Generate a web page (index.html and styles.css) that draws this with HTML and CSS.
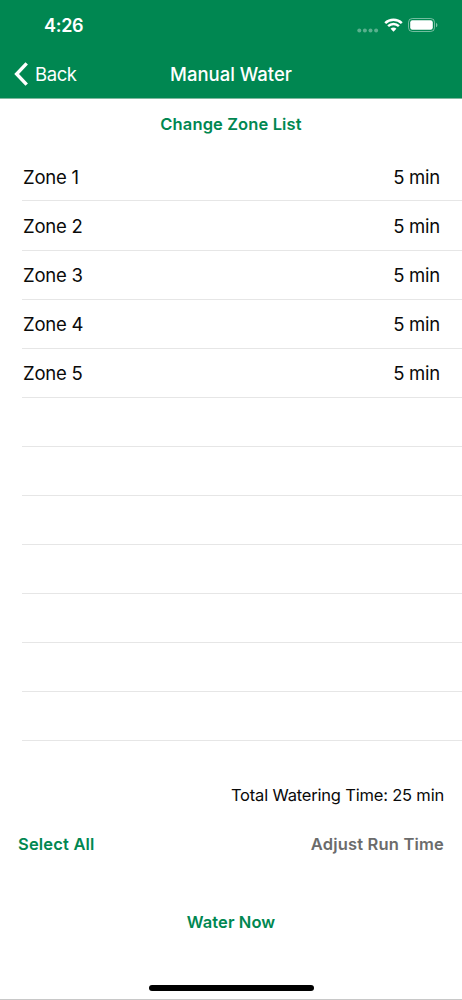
FILE: index.html
```html
<!DOCTYPE html>
<html lang="en">
<head>
    <meta charset="UTF-8">
    <meta name="viewport" content="width=device-width, initial-scale=1.0">
    <title>Manual Water</title>
    <link rel="stylesheet" href="styles.css">
</head>
<body>
    <div class="screen">
        <header class="header">
            <div class="status-bar">
                <span class="clock">4:26</span>
                <div class="status-icons">
                    <svg class="signal" width="22" height="5" viewBox="0 0 22 5">
                        <circle cx="2.3" cy="2.5" r="2"/>
                        <circle cx="7.9" cy="2.5" r="2"/>
                        <circle cx="13.5" cy="2.5" r="2"/>
                        <circle cx="19.1" cy="2.5" r="2"/>
                    </svg>
                    <svg class="wifi" width="19" height="14" viewBox="0 0 19 14" fill="none" stroke="#fff" stroke-width="2.5">
                        <path d="M1.2 5.1a11.8 11.8 0 0 1 16.6 0"/>
                        <path d="M4.1 8.2a7.7 7.7 0 0 1 10.8 0"/>
                        <path d="M9.5 13.7 6.6 10.8a4 4 0 0 1 5.8 0Z" fill="#fff" stroke="none"/>
                    </svg>
                    <svg class="battery" width="30" height="14" viewBox="0 0 30 14">
                        <rect x="0.5" y="0.5" width="26" height="13" rx="3.8" fill="none" stroke="#fff" stroke-opacity="0.45"/>
                        <rect x="2.2" y="2.2" width="22.6" height="9.6" rx="2.2" fill="#fff"/>
                        <path d="M28 4.7c1.9 .8 1.9 3.8 0 4.6Z" fill="#fff" fill-opacity="0.5"/>
                    </svg>
                </div>
            </div>
            <nav class="nav-bar">
                <a class="back" href="#">
                    <svg width="14" height="24" viewBox="0 0 14 24" fill="none" stroke="#fff" stroke-width="3.4">
                        <path d="M12.7 1.3 2.6 12l10.1 10.7"/>
                    </svg>
                    <span>Back</span>
                </a>
                <h1 class="title">Manual Water</h1>
            </nav>
        </header>

        <main class="content">
            <a class="change-list" href="#">Change Zone List</a>

            <ul class="zones">
                <li class="zone"><span>Zone 1</span><span>5 min</span></li>
                <li class="zone"><span>Zone 2</span><span>5 min</span></li>
                <li class="zone"><span>Zone 3</span><span>5 min</span></li>
                <li class="zone"><span>Zone 4</span><span>5 min</span></li>
                <li class="zone"><span>Zone 5</span><span>5 min</span></li>
                <li class="zone"></li>
                <li class="zone"></li>
                <li class="zone"></li>
                <li class="zone"></li>
                <li class="zone"></li>
                <li class="zone"></li>
                <li class="zone"></li>
            </ul>

            <p class="total">Total Watering Time: 25 min</p>

            <div class="actions">
                <a class="select-all" href="#">Select All</a>
                <a class="adjust" href="#">Adjust Run Time</a>
            </div>

            <a class="water-now" href="#">Water Now</a>
        </main>

        <div class="home-indicator"></div>
    </div>
</body>
</html>
```

FILE: styles.css
```css
* {
    margin: 0;
    padding: 0;
    box-sizing: border-box;
}

body {
    font-family: 'Inter', sans-serif;
    color: #0a0a0a;
    background: #fff;
}

a {
    color: #008751;
    text-decoration: none;
}

.screen {
    display: flex;
    flex-direction: column;
    height: 1000px;
    overflow: hidden;
    border-bottom: 1px solid #c8c8c8;
}

/* Green top area: status bar + navigation */
.header {
    height: 98px;
    flex-shrink: 0;
    background: #008751;
    color: #fff;
}

.status-bar {
    display: flex;
    justify-content: space-between;
    height: 50px;
    padding: 0 23px 0 44px;
}

.clock {
    font-size: 18px;
    font-weight: 600;
    line-height: 52px;
    letter-spacing: -0.3px;
}

.status-icons {
    display: flex;
    align-items: center;
}

.signal {
    margin: 10px 5px 0 0;
    fill: #fff;
    opacity: 0.35;
}

.wifi {
    margin-right: 5px;
}

.battery {
    margin-right: 1px;
}

.nav-bar {
    display: grid;
    grid-template-columns: 1fr auto 1fr;
    align-items: center;
    height: 48px;
    padding: 0 14px;
}

.back {
    display: flex;
    align-items: center;
    gap: 7px;
    color: #fff;
    font-size: 18.5px;
    letter-spacing: -0.4px;
}

.title {
    font-size: 18.5px;
    font-weight: 500;
}

/* Zone list */
.content {
    display: flex;
    flex-direction: column;
    flex: 1;
    border-top: 1px solid #7fb79e;
}

.change-list {
    height: 53.4px;
    line-height: 50px;
    text-align: center;
    font-size: 16.5px;
    font-weight: 600;
    letter-spacing: 0.12px;
}

.zones {
    list-style: none;
    padding-left: 22px;
}

.zone {
    display: flex;
    justify-content: space-between;
    align-items: center;
    height: 49.09px;
    padding: 1px 22px 0 1px;
    border-bottom: 1px solid #e6e6e6;
    font-size: 18.5px;
    letter-spacing: -0.25px;
}

.total {
    margin-top: 43px;
    padding-right: 18px;
    line-height: 22px;
    text-align: right;
    font-size: 16.5px;
    letter-spacing: -0.19px;
}

/* Bottom buttons */
.actions {
    display: flex;
    justify-content: space-between;
    margin-top: 27px;
    padding: 0 18px;
    line-height: 22px;
    font-size: 16.5px;
    font-weight: 600;
    letter-spacing: 0.18px;
}

.adjust {
    color: #6b6b6b;
}

.water-now {
    margin-top: 56px;
    line-height: 22px;
    text-align: center;
    font-size: 16.5px;
    font-weight: 600;
    letter-spacing: 0.1px;
}

.home-indicator {
    width: 165px;
    height: 6px;
    margin: 0 auto 8px;
    border-radius: 3px;
    background: #000;
}
```
